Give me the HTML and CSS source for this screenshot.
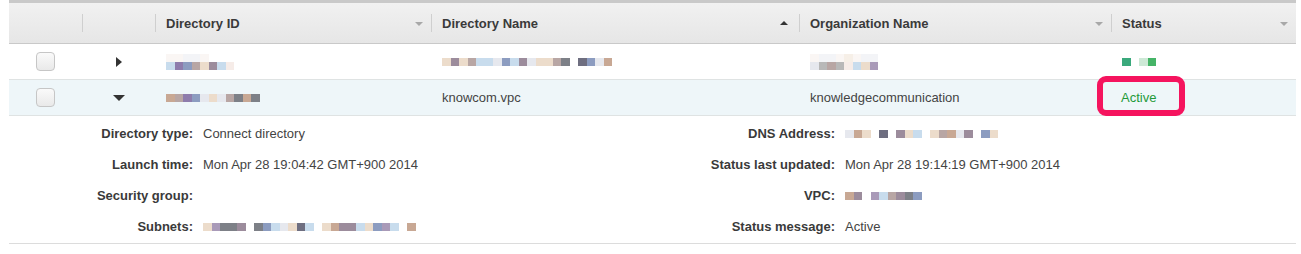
FILE: index.html
```html
<!DOCTYPE html>
<html lang="en">
<head>
  <meta charset="UTF-8" />
  <title>Directories</title>
  <link rel="stylesheet" href="styles.css">
</head>
<body>
  <div class="page">
    <div class="dir-table">
      <!-- Header -->
      <div class="head">
        <div class="cell"></div>
        <div class="cell sep"></div>
        <div class="cell sep">Directory ID<span class="sort"></span></div>
        <div class="cell sep">Directory Name<span class="sort up"></span></div>
        <div class="cell sep">Organization Name<span class="sort"></span></div>
        <div class="cell sep">Status<span class="sort"></span></div>
      </div>

      <!-- Row 1 (collapsed) -->
      <div class="row">
        <div class="cell center"><span class="check"></span></div>
        <div class="cell center"><span class="tri-right"></span></div>
        <div class="cell">
          <span class="mosaic">
            <span class="line faint"><i class="m0"></i><i class="m0"></i><i class="m8"></i><i class="m8"></i><i class="m0"></i></span>
            <span class="line"><i class="m5"></i><i class="m2b"></i><i class="m6"></i><i class="m4"></i><i class="m1"></i><i class="m7"></i><i class="m5"></i><i class="m0"></i></span>
          </span>
        </div>
        <div class="cell">
          <span class="mosaic">
            <span class="line"><i class="m1"></i><i class="m7"></i><i class="m1"></i><i class="m4"></i><i class="m5"></i><i class="m5"></i><i class="m8"></i><i class="m6"></i><i class="m5"></i><i class="m7"></i><i class="m8"></i><i class="m1"></i><i class="m1"></i><i class="m4"></i><i class="m3"></i><i class="gap"></i><i class="m10"></i><i class="m6"></i><i class="m8"></i><i class="m9"></i></span>
          </span>
        </div>
        <div class="cell">
          <span class="mosaic">
            <span class="line faint"><i class="m0"></i><i class="m8"></i><i class="m8"></i><i class="m0"></i><i class="m1"></i><i class="m0"></i><i class="m8"></i><i class="m8"></i></span>
            <span class="line"><i class="m8"></i><i class="m3b"></i><i class="m4"></i><i class="m3b"></i><i class="m0"></i><i class="m5"></i><i class="m1"></i><i class="m2"></i></span>
          </span>
        </div>
        <div class="cell">
          <span class="mosaic">
            <span class="line"><i class="g1"></i><i class="gap"></i><i class="g2"></i><i class="g3"></i></span>
          </span>
        </div>
      </div>

      <!-- Row 2 (expanded) -->
      <div class="row open">
        <div class="cell center"><span class="check"></span></div>
        <div class="cell center"><span class="tri-down"></span></div>
        <div class="cell">
          <span class="mosaic">
            <span class="line"><i class="m9"></i><i class="m4"></i><i class="m2b"></i><i class="m6"></i><i class="m8"></i><i class="m1"></i><i class="m8"></i><i class="m4"></i><i class="m3"></i><i class="m9"></i><i class="m3"></i></span>
          </span>
        </div>
        <div class="cell">knowcom.vpc</div>
        <div class="cell">knowledgecommunication</div>
        <div class="cell status">Active</div>
      </div>

      <!-- Expanded details -->
      <div class="detail">
        <div class="detail-col">
          <div class="pair"><span class="label">Directory type:</span><span class="value">Connect directory</span></div>
          <div class="pair"><span class="label">Launch time:</span><span class="value">Mon Apr 28 19:04:42 GMT+900 2014</span></div>
          <div class="pair"><span class="label">Security group:</span><span class="value"></span></div>
          <div class="pair"><span class="label">Subnets:</span>
            <span class="value">
              <span class="mosaic">
                <span class="line"><i class="m1"></i><i class="m2"></i><i class="m3"></i><i class="m3"></i><i class="m7"></i><i class="gap"></i><i class="m3"></i><i class="m6"></i><i class="m5"></i><i class="m8"></i><i class="m1"></i><i class="m10"></i><i class="m5"></i><i class="gap"></i><i class="m1"></i><i class="m9"></i><i class="m7"></i><i class="m7"></i><i class="m5"></i><i class="m1"></i><i class="m6"></i><i class="m2"></i><i class="m5"></i><i class="gap"></i><i class="m9"></i></span>
              </span>
            </span>
          </div>
        </div>
        <div class="detail-col">
          <div class="pair"><span class="label">DNS Address:</span>
            <span class="value">
              <span class="mosaic">
                <span class="line"><i class="m8"></i><i class="m9"></i><i class="m1"></i><i class="gap"></i><i class="m10"></i><i class="gap"></i><i class="m7"></i><i class="m1"></i><i class="m5"></i><i class="gap"></i><i class="m1"></i><i class="m4"></i><i class="m9"></i><i class="m8"></i><i class="m7"></i><i class="gap"></i><i class="m6"></i><i class="m1"></i></span>
              </span>
            </span>
          </div>
          <div class="pair"><span class="label">Status last updated:</span><span class="value">Mon Apr 28 19:14:19 GMT+900 2014</span></div>
          <div class="pair"><span class="label">VPC:</span>
            <span class="value">
              <span class="mosaic">
                <span class="line"><i class="m9"></i><i class="m7"></i><i class="gap"></i><i class="m2"></i><i class="m5"></i><i class="m4"></i><i class="m7"></i><i class="m3"></i><i class="m6"></i></span>
              </span>
            </span>
          </div>
          <div class="pair"><span class="label">Status message:</span><span class="value">Active</span></div>
        </div>
      </div>
    </div>

    <!-- annotation around the status -->
    <div class="callout"></div>
  </div>
</body>
</html>
```

FILE: styles.css
```css
body {
  margin: 0;
  font-family: "Liberation Sans", Arial, sans-serif;
  font-size: 13px;
  color: #444;
  background: #fff;
}

.page {
  position: relative;
  width: 1301px;
  height: 254px;
}

.dir-table {
  margin-left: 9px;
  width: 1287px;
  border-top: 3px solid #c9c9c9;
}

.head,
.row {
  display: grid;
  grid-template-columns: 73px 73px 276px 368px 312px 185px;
}

.head {
  height: 40px;
  background: linear-gradient(#f1f1f1, #e6e6e6);
  border-bottom: 1px solid #c9c9c9;
  font-weight: bold;
  color: #3a3a3a;
}

.cell {
  position: relative;
  display: flex;
  align-items: center;
  padding: 0 11px;
  white-space: nowrap;
}

.head .cell.sep::before {
  content: "";
  position: absolute;
  left: 0;
  top: 11px;
  height: 18px;
  border-left: 1px solid #cfcfcf;
}

.cell.center {
  justify-content: center;
  padding: 0;
}

.sort {
  position: absolute;
  right: 8px;
  top: 19px;
  border-left: 4px solid transparent;
  border-right: 4px solid transparent;
  border-top: 4px solid #a8a8a8;
}

.sort.up {
  top: 18px;
  border-top: none;
  border-bottom: 4px solid #333;
  right: 11px;
}

.row {
  height: 35px;
  border-bottom: 1px solid #dfe3e3;
}

.row.open {
  background: #eef6f9;
}

.check {
  width: 17px;
  height: 17px;
  border: 1px solid #c6c6c6;
  border-radius: 4px;
  background: linear-gradient(#fafafa, #e9e9e9);
  margin-left: -1px;
}

.tri-right {
  border-top: 5px solid transparent;
  border-bottom: 5px solid transparent;
  border-left: 6px solid #333;
  margin-left: 1px;
}

.tri-down {
  border-left: 6px solid transparent;
  border-right: 6px solid transparent;
  border-top: 6px solid #333;
}

.status {
  color: #1f9a3a;
  padding-left: 10px;
}

/* blurred values */
.mosaic {
  display: inline-flex;
  flex-direction: column;
}

.mosaic .line {
  display: flex;
}

.mosaic .line.faint {
  opacity: 0.45;
}

.mosaic i {
  display: block;
  width: 8.5px;
  height: 8px;
}

.m0 { background: #f6ece8; }
.m1 { background: #ecdccb; }
.m2 { background: #a99ab8; }
.m2b { background: #8e7cac; }
.m3 { background: #7d8087; }
.m3b { background: #b8b8b8; }
.m4 { background: #b8a6a4; }
.m5 { background: #c8dced; }
.m6 { background: #8c9cc0; }
.m7 { background: #9c8c9c; }
.m8 { background: #e6e8ee; }
.m9 { background: #c8a894; }
.m10 { background: #6e6e80; }
.g1 { background: #3aa97c; }
.g2 { background: #cde9d6; }
.g3 { background: #45b467; }

/* details */
.detail {
  display: grid;
  grid-template-columns: 643px 644px;
  padding: 2px 0 1px;
  border-bottom: 1px solid #dcdcdc;
}

.pair {
  display: grid;
  grid-template-columns: 184px 1fr;
  column-gap: 10px;
  height: 31px;
  align-items: center;
}

.detail-col:last-child .pair {
  grid-template-columns: 183px 1fr;
}

.label {
  text-align: right;
  font-weight: bold;
  color: #3a3a3a;
}

.value {
  display: flex;
  align-items: center;
  white-space: nowrap;
}

.callout {
  position: absolute;
  left: 1097px;
  top: 76px;
  width: 76px;
  height: 28px;
  border: 6px solid #f5145e;
  border-radius: 9px;
}
```
